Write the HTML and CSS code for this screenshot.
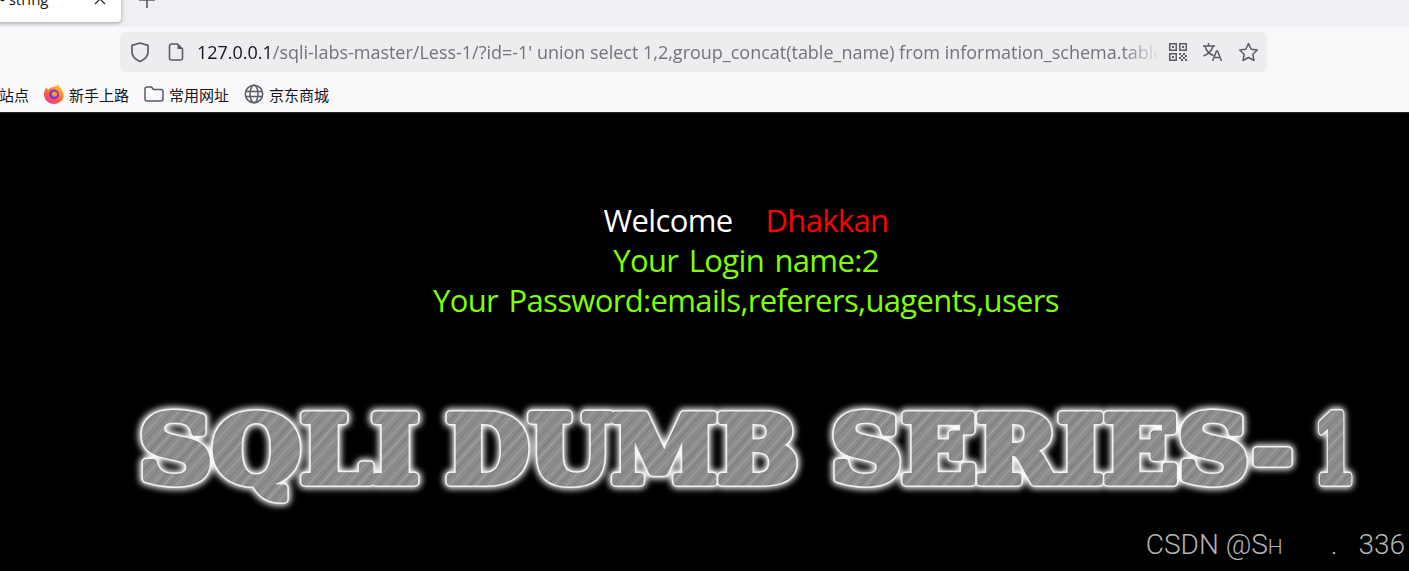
FILE: index.html
```html
<!DOCTYPE html>
<html lang="en">
<head>
    <meta charset="UTF-8">
    <title>Less-1 - string</title>
    <link rel="stylesheet" href="styles.css">
</head>
<body>
    <div class="browser">
        <div class="tab-strip">
            <div class="tab">
                <span class="tab-title">- string</span>
                <svg class="tab-close" width="12" height="12" viewBox="0 0 12 12"><path d="M1 1l10 10M11 1L1 11" stroke="#2b2a33" stroke-width="1.3" fill="none"/></svg>
            </div>
            <svg class="tab-new" width="18" height="18" viewBox="0 0 18 18"><path d="M9 1v16M1 9h16" stroke="#5b5b66" stroke-width="1.6" fill="none"/></svg>
        </div>
        <div class="nav-bar">
            <div class="url-bar">
                <svg class="url-icon shield" width="20" height="22" viewBox="0 0 20 22"><path d="M10 2l8 2.4v6.2c0 4.600-3.200 8-8 9.900-4.800-1.900-8-5.300-8-9.900V4.400z" stroke="#5b5b66" stroke-width="1.700" fill="none" stroke-linejoin="round"/></svg>
                <svg class="url-icon file" width="16" height="18" viewBox="0 0 16 18"><path d="M3.500 1h6l5 5v9a2 2 0 0 1-2 2h-9a2 2 0 0 1-2-2V3a2 2 0 0 1 2-2z" stroke="#5b5b66" stroke-width="1.600" fill="none"/><path d="M9.500 1v5h5z" fill="#5b5b66"/></svg>
                <div class="url-text"><span class="url-host">127.0.0.1</span>/sqli-labs-master/Less-1/?id=-1' union select 1,2,group_concat(table_name) from information_schema.tables</div>
                <svg class="url-action qr" width="18" height="18" viewBox="0 0 18 18" fill="#5b5b66">
                    <path fill-rule="evenodd" d="M0 0h8v8H0zM1.500 1.500v5h5v-5zM10 0h8v8h-8zM11.500 1.500v5h5v-5zM0 10h8v8H0zM1.500 11.500v5h5v-5z"/>
                    <path d="M3 3h2v2H3zM13 3h2v2h-2zM3 13h2v2H3zM10 10h2v2h-2zM12 12h2v2h-2zM14 10h2v2h-2zM16 12h2v2h-2zM10 14h2v2h-2zM14 14h2v2h-2zM12 16h2v2h-2zM16 16h2v2h-2z"/>
                </svg>
                <svg class="url-action" width="21" height="20" viewBox="0 0 21 20"><path d="M1 4h12M6.500 1v3M3 4c1 4 4 8 8.500 9.500M11 4c-1 4-4.500 8-9.500 10M10.500 19l4-10h1l4 10M12 15.500h6" stroke="#5b5b66" stroke-width="1.500" fill="none"/></svg>
                <svg class="url-action" width="21" height="20" viewBox="0 0 21 20"><path d="M10.500 1.500l2.700 5.700 6.100.8-4.500 4.300 1.200 6.200-5.500-3-5.500 3 1.200-6.200L1.700 8l6.100-.8z" stroke="#5b5b66" stroke-width="1.500" fill="none" stroke-linejoin="round"/></svg>
            </div>
        </div>
        <div class="bookmarks">
            <span class="bookmark">站点</span>
            <span class="bookmark">
                <svg width="20" height="20" viewBox="0 0 20 20">
                    <defs><linearGradient id="fox" x1="0.8" y1="0" x2="0.2" y2="1"><stop offset="0" stop-color="#ffd43a"/><stop offset="0.45" stop-color="#ff7a2a"/><stop offset="1" stop-color="#f0308a"/></linearGradient></defs>
                    <path d="M14 0c.5 2 2 2.500 3.500 5 2 3 2.500 6 2 8-1 4-5 7-9.500 7-5.500 0-10-4.300-10-9.700C0 7.500 1 5 2.500 3.500L4 6c1-1.500 2.500-2.500 4-2.800C10.500 2.700 13 2.500 14 0z" fill="url(#fox)"/>
                    <circle cx="10" cy="10.500" r="5" fill="#7d3bd6"/>
                    <circle cx="10.500" cy="10" r="2.600" fill="#ff9a2e"/>
                </svg>
                新手上路
            </span>
            <span class="bookmark">
                <svg width="20" height="18" viewBox="0 0 20 18"><path d="M3 2h4.500l2 2.500H17a2 2 0 0 1 2 2V14a2 2 0 0 1-2 2H3a2 2 0 0 1-2-2V4a2 2 0 0 1 2-2z" stroke="#5b5b66" stroke-width="1.500" fill="none" stroke-linejoin="round"/></svg>
                常用网址
            </span>
            <span class="bookmark">
                <svg width="20" height="20" viewBox="0 0 20 20"><g stroke="#5b5b66" stroke-width="1.500" fill="none"><circle cx="10" cy="10" r="8.700"/><ellipse cx="10" cy="10" rx="4" ry="8.700"/><path d="M1.500 7.500h17M1.500 12.500h17"/></g></svg>
                京东商城
            </span>
        </div>
    </div>

    <main class="page">
        <div class="message">
            <div class="welcome">Welcome<span class="name">Dhakkan</span></div>
            <div>Your Login name:2</div>
            <div>Your Password:emails,referers,uagents,users</div>
        </div>
        <svg class="logo" width="1260" height="120" viewBox="0 0 1260 120">
            <defs>
                <pattern id="brushed" width="29" height="29" patternUnits="userSpaceOnUse" patternTransform="rotate(42)">
                    <rect width="29" height="29" fill="#8c8c8c"/>
                    <rect x="2" width="1" height="29" fill="#9f9f9f"/>
                    <rect x="6" width="2" height="29" fill="#808080"/>
                    <rect x="11" width="1" height="29" fill="#a8a8a8"/>
                    <rect x="15" width="1" height="29" fill="#7b7b7b"/>
                    <rect x="20" width="2" height="29" fill="#989898"/>
                    <rect x="26" width="1" height="29" fill="#7e7e7e"/>
                </pattern>
                <filter id="glow" x="-5%" y="-30%" width="110%" height="160%">
                    <feGaussianBlur in="SourceGraphic" stdDeviation="3"/>
                </filter>
            </defs>
            <g class="logo-text">
                <g class="logo-glow" filter="url(#glow)">
                    <text x="24" y="90" textLength="280" lengthAdjust="spacingAndGlyphs">SQLI</text>
                    <text x="331" y="90" textLength="352" lengthAdjust="spacingAndGlyphs">DUMB</text>
                    <text x="716" y="90" textLength="462" lengthAdjust="spacingAndGlyphs">SERIES-</text>
                    <text x="1199" y="90" textLength="41" lengthAdjust="spacingAndGlyphs">1</text>
                </g>
                <g class="logo-rim">
                    <text x="24" y="90" textLength="280" lengthAdjust="spacingAndGlyphs">SQLI</text>
                    <text x="331" y="90" textLength="352" lengthAdjust="spacingAndGlyphs">DUMB</text>
                    <text x="716" y="90" textLength="462" lengthAdjust="spacingAndGlyphs">SERIES-</text>
                    <text x="1199" y="90" textLength="41" lengthAdjust="spacingAndGlyphs">1</text>
                </g>
                <g class="logo-face">
                    <text x="24" y="90" textLength="280" lengthAdjust="spacingAndGlyphs">SQLI</text>
                    <text x="331" y="90" textLength="352" lengthAdjust="spacingAndGlyphs">DUMB</text>
                    <text x="716" y="90" textLength="462" lengthAdjust="spacingAndGlyphs">SERIES-</text>
                    <text x="1199" y="90" textLength="41" lengthAdjust="spacingAndGlyphs">1</text>
                </g>
            </g>
        </svg>
    </main>

    <div class="watermark">CSDN @S<span class="small-h">H</span><span class="mark-dot">.</span>336</div>
</body>
</html>
```

FILE: styles.css
```css
html,
body {
    margin: 0;
    padding: 0;
    height: 571px;
    overflow: hidden;
    background: #000000;
}

body {
    position: relative;
    font-family: "Open Sans", sans-serif;
}

.browser {
    height: 112px;
    background: #f9f9fb;
    border-bottom: 1px solid #2a2a2a;
}

.tab-strip {
    display: flex;
    align-items: flex-start;
    height: 27px;
    background: #f0f0f4;
    overflow: hidden;
}

.tab {
    display: flex;
    align-items: center;
    box-sizing: border-box;
    width: 131px;
    height: 32px;
    margin: -10px 0 0 -10px;
    padding: 0 15px 15px 10px;
    background: #ffffff;
    border-radius: 4px;
    box-shadow: 0 1px 4px rgba(0, 0, 0, 0.35);
}

.tab-title {
    flex: 1;
    font-size: 15px;
    color: #15141a;
}

.tab-new {
    margin: -9px 0 0 17px;
}

.nav-bar {
    height: 53px;
}

.url-bar {
    display: flex;
    align-items: center;
    box-sizing: border-box;
    width: 1147px;
    height: 40px;
    margin-left: 120px;
    position: relative;
    top: 5px;
    padding: 0 8px 0 10px;
    background: #ededf0;
    border-radius: 6px;
}

.url-icon.file {
    margin-left: 18px;
}

.url-text {
    flex: 1;
    min-width: 0;
    margin: 0 9px 0 13px;
    font-size: 18px;
    letter-spacing: -0.01px;
    color: #737378;
    white-space: nowrap;
    overflow: hidden;
    -webkit-mask-image: linear-gradient(to right, #000 96%, transparent);
    mask-image: linear-gradient(to right, #000 96%, transparent);
}

.url-host {
    color: #15141a;
}

.url-action {
    flex-shrink: 0;
    margin-left: 15px;
}

.url-action.qr {
    margin-left: 0;
}

.bookmarks {
    display: flex;
    align-items: center;
    gap: 15px;
    height: 28px;
    margin-left: -1px;
    font-family: "Noto Sans CJK SC", sans-serif;
    font-size: 15px;
    color: #15141a;
}

.bookmark {
    display: flex;
    align-items: center;
    gap: 5px;
}

.page {
    padding-top: 87px;
}

.message {
    padding-left: 83px;
    font-size: 31px;
    letter-spacing: -0.65px;
    word-spacing: 3px;
    line-height: 40px;
    text-align: center;
    color: #7fff00;
}

.welcome {
    color: #ffffff;
}

.name {
    margin-left: 33px;
    color: #ff0000;
}

.logo {
    display: block;
    margin: 72px 0 0 115px;
}

.logo-text {
    font-family: "DejaVu Serif", serif;
    font-size: 92px;
    font-weight: 700;
    stroke-linejoin: round;
}

.logo-glow {
    fill: #ffffff;
    stroke: #ffffff;
    stroke-width: 13px;
}

.logo-rim {
    fill: #f2f2f2;
    stroke: #f2f2f2;
    stroke-width: 10px;
}

.logo-face {
    fill: url(#brushed);
    stroke: url(#brushed);
    stroke-width: 7px;
}

.watermark {
    position: absolute;
    right: 4px;
    bottom: 6px;
    font-family: "Roboto", sans-serif;
    font-size: 28px;
    font-weight: 300;
    line-height: 36px;
    color: #b4b4b4;
    white-space: nowrap;
}

.small-h {
    font-size: 21px;
}

.mark-dot {
    margin: 0 21px 0 48px;
}
```
